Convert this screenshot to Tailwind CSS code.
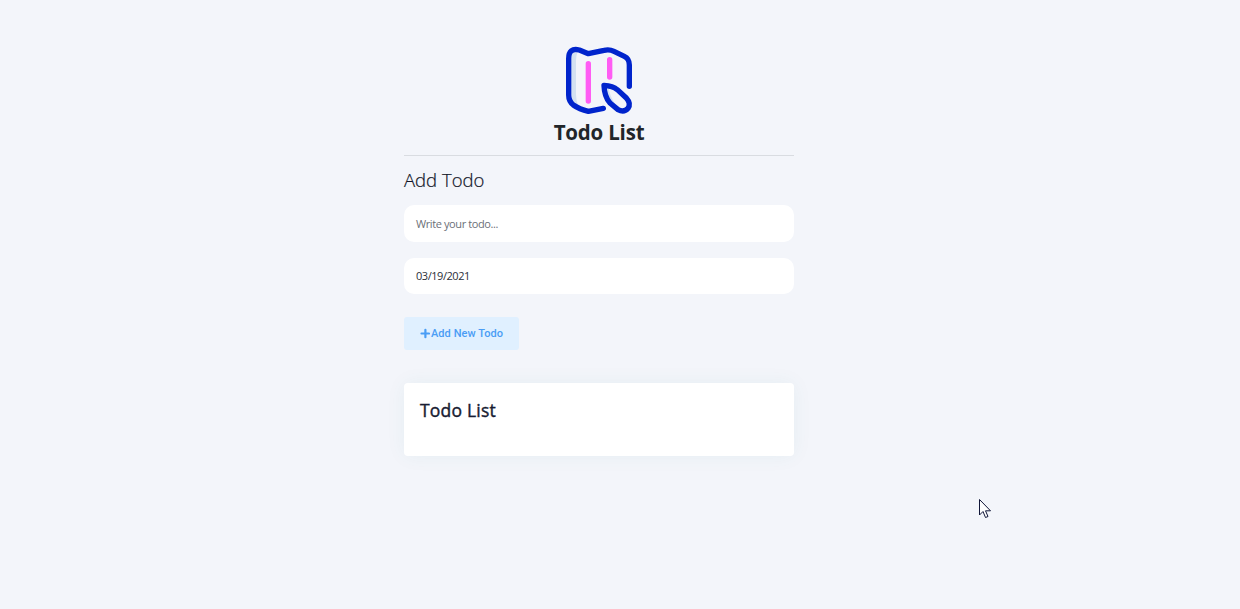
<!DOCTYPE html>
<html lang="en">
<head>
<meta charset="utf-8">
<title>Todo List</title>
<script src="https://cdn.jsdelivr.net/npm/@tailwindcss/browser@4"></script>
</head>
<body class="h-screen overflow-hidden bg-[#f3f5fa] font-['Open_Sans','Noto_Sans',sans-serif] text-[#212529]">
<main class="ml-[404px] flex w-[390px] flex-col pt-10">
  <header class="flex h-[116px] flex-col items-center border-b border-[#d9dce1]">
    <svg class="h-20 w-[90px] shrink-0" viewBox="0 0 270 240" fill="none" stroke-linecap="round" stroke-linejoin="round">
      <path d="M50 38L70 38Q66 48 66 62V164Q66 184 74 200L52 190Z" fill="#d3e1f1"/>
      <path d="M149 136L164 139Q164 166 189 200L180 196Q153 170 149 136Z" fill="#d3e1f1"/>
      <path d="M103 71V183M167 59V111" stroke="#ff5cf4" stroke-width="16"/>
      <path d="M226 139V75Q226 56 211 49L180 34Q166 27 150 31L103 41L76 30Q44 22 44 56V165Q44 184 58 195Q76 208 103 214L148 205" stroke="#0024cc" stroke-width="16"/>
      <path d="M150 136Q177 138 190 149L217 174Q232 191 222 205Q210 219 192 209L168 189Q151 170 150 136Z" stroke="#0024cc" stroke-width="16"/>
    </svg>
    <h1 class="text-[20.500px] leading-[25px] font-bold tracking-[-0.2px]">Todo List</h1>
  </header>
  <form class="flex flex-col items-start">
    <h2 class="mt-3 h-[25px] text-[18.500px] leading-6 font-light text-[#101426] [-webkit-text-stroke:0.2px_#101426]">Add Todo</h2>
    <div class="mt-3 flex h-[37px] w-full items-center rounded-[10px] bg-white px-3 pt-px text-[11px] tracking-[-0.4px] text-[#6c7078]">Write your todo...</div>
    <div class="mt-4 flex h-9 w-full items-center rounded-[10px] bg-white px-3 text-[11px] tracking-[-0.45px] text-[#2b2e38]">03/19/2021</div>
    <button type="button" class="mt-[23px] flex h-[33px] w-[115px] items-center rounded-[3px] bg-[#e0f0ff] pl-4 font-[Roboto,sans-serif] text-[11px] font-medium tracking-[0.06px] whitespace-nowrap text-[#4a9df5]">
      <svg class="mr-px h-[11px] w-[10px] shrink-0" viewBox="0 0 10 11" fill="none" stroke="#4a9df5" stroke-width="2.200" stroke-linecap="round"><path d="M1.500 5.500H9M5.400 1.800V9.200"/></svg>
      <span class="pt-px">Add New Todo</span>
    </button>
  </form>
  <section class="mt-[33px] h-[73px] rounded-[4px] bg-white px-4 pt-[15px] shadow-[0_0_20px_rgba(8,120,120,0.06)]">
    <h2 class="text-[17.500px] leading-6 font-normal tracking-[0.2px] text-[#181c32] [-webkit-text-stroke:0.4px_#181c32]">Todo List</h2>
  </section>
</main>
<svg class="pointer-events-none absolute top-[498px] left-[978px] h-[21px] w-[14px]" viewBox="0 0 14 21"><path d="M1.500 1.500V17L5 13.500L7.500 19.500L10 18.500L7.500 12.800H12.500Z" fill="#fff" stroke="#101638" stroke-width="1"/></svg>
</body>
</html>
